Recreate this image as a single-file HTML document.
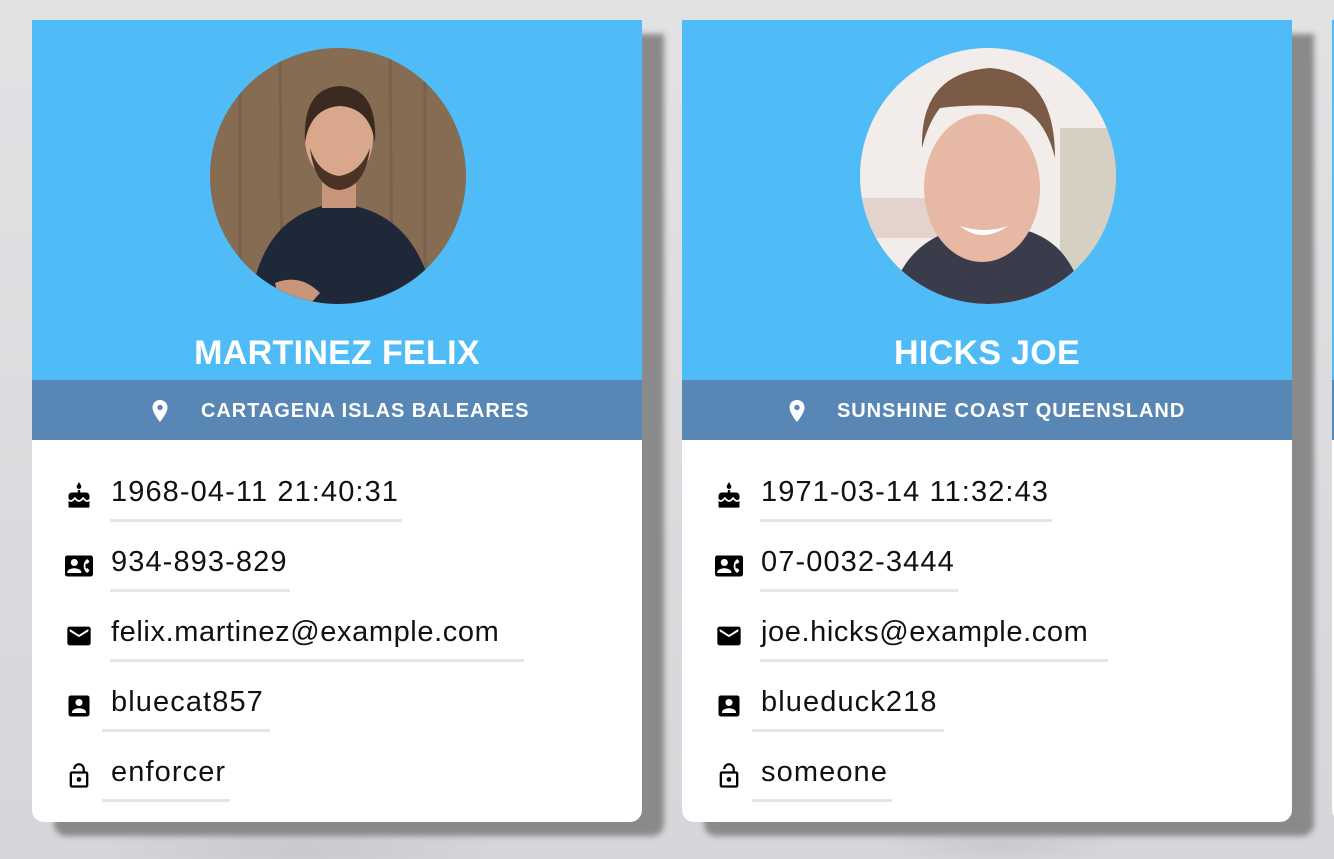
<!DOCTYPE html>
<html><head><meta charset="utf-8"><style>
html,body{margin:0;padding:0}
body{width:1334px;height:859px;overflow:hidden;background:#dcdce0;font-family:"Liberation Sans",sans-serif;position:relative}
.bgt{position:absolute;inset:0;background:
 radial-gradient(ellipse 200px 30px at 300px 850px,#c9c9cd,transparent),
 radial-gradient(ellipse 120px 20px at 1000px 845px,#cacace,transparent),
 linear-gradient(180deg,#e2e2e5,#d6d6da)}
.card{position:absolute;top:20px;width:610px;height:802px;background:#fff;border-radius:0 0 12px 12px;box-shadow:22px 14px 6px #8a8a8a}
.head{position:absolute;left:0;top:0;width:610px;height:360px;background:#4fbcf7}
.name{position:absolute;left:0;width:610px;top:313px;text-align:center;color:#fff;font-weight:bold;font-size:34px;line-height:40px;letter-spacing:0.3px}
.band{position:absolute;left:0;top:360px;width:610px;height:60px;background:#5887b5;color:#fff;font-weight:bold;font-size:20px;line-height:60px;letter-spacing:0.95px}
.band svg{position:absolute;top:19px}
.band span{position:absolute;top:1px}
.av{position:absolute;left:178px;top:28px;width:256px;height:256px;border-radius:50%;overflow:hidden}
.row{position:absolute;left:0;height:40px}
.row svg{position:absolute;left:33px;top:8px}
.row .t{position:absolute;font-size:29px;line-height:34px;color:#111;white-space:nowrap;top:1px;letter-spacing:1.1px}
.row .u{position:absolute;height:3px;background:#e8e4e6;top:45px}
</style></head><body>
<div class="bgt"></div>
<div class="card" style="left:1332px"><div class="head"></div><div class="band"></div></div>

<!-- card 1 -->
<div class="card" style="left:32px">
 <div class="head">
  <div class="av">
   <svg width="256" height="256" viewBox="0 0 256 256">
    <rect width="256" height="256" fill="#7d634c"/>
    <g opacity=".35" stroke="#4a3828" stroke-width="3"><line x1="30" y1="0" x2="30" y2="256"/><line x1="70" y1="0" x2="72" y2="256"/><line x1="180" y1="0" x2="182" y2="256"/><line x1="215" y1="0" x2="215" y2="256"/></g>
    <rect x="0" y="0" width="256" height="256" fill="#a08266" opacity=".3"/>
    <path d="M40 256 C50 180 90 160 128 155 C170 160 210 180 225 256Z" fill="#1e2838"/>
    <rect x="112" y="120" width="34" height="40" fill="#c9957a"/>
    <ellipse cx="129" cy="90" rx="34" ry="44" fill="#d9a88c"/>
    <path d="M95 95 Q92 40 130 38 Q168 40 165 95 Q160 60 130 58 Q100 60 95 95Z" fill="#3b2a20"/>
    <path d="M100 100 Q105 140 129 142 Q155 140 160 100 Q150 125 129 128 Q108 125 100 100Z" fill="#4a3326"/>
    <path d="M65 235 Q90 225 110 245 L100 256 L70 256Z" fill="#c9957a"/>
   </svg>
  </div>
  <div class="name">MARTINEZ FELIX</div>
 </div>
 <div class="band">
  <svg style="left:118px" width="20" height="24" viewBox="0 0 20 24"><path d="M10 1C5.6 1 2.5 4.3 2.5 8.5 2.5 14 10 23 10 23s7.5-9 7.5-14.5C17.5 4.3 14.4 1 10 1zm0 10.2a2.7 2.7 0 110-5.4 2.7 2.7 0 010 5.4z" fill="#fff"/></svg>
  <span style="left:169px">CARTAGENA ISLAS BALEARES</span>
 </div>
 <div class="row" style="top:454px"><svg width="28" height="28" viewBox="0 0 24 24"><path d="M12 6c1.1 0 2-.9 2-2 0-.38-.1-.73-.29-1.030L12 0l-1.71 2.97c-.19.3-.29.65-.29 1.03 0 1.1.9 2 2 2zm4.6 9.99l-1.07-1.07-1.08 1.07c-1.3 1.3-3.58 1.31-4.89 0l-1.07-1.07-1.09 1.07C6.75 16.64 5.88 17 4.96 17c-.73 0-1.4-.23-1.96-.61V21c0 .55.45 1 1 1h16c.55 0 1-.45 1-1v-4.61c-.56.38-1.23.61-1.96.61-.92 0-1.79-.36-2.44-1.01zM18 9h-5V7h-2v2H6c-1.66 0-3 1.34-3 3v1.54c0 1.08.88 1.96 1.96 1.960.52 0 1.02-.2 1.38-.57l2.14-2.13 2.13 2.13c.74.74 2.03.74 2.77 0l2.14-2.13 2.13 2.13c.37.37.86.57 1.38.57 1.08 0 1.96-.88 1.96-1.96V12C21 10.34 19.66 9 18 9z"/></svg><span class="t" style="left:79px">1968-04-11 21:40:31</span><div class="u" style="left:78px;width:292px"></div></div>
 <div class="row" style="top:524px"><svg width="28" height="28" viewBox="0 0 24 24"><path d="M22 3H2C.9 3 0 3.9 0 5v14c0 1.1.9 2 2 2h20c1.1 0 1.99-.9 1.99-2L24 5c0-1.1-.9-2-2-2zM8 6c1.66 0 3 1.34 3 3s-1.34 3-3 3-3-1.34-3-3 1.34-3 3-3zm6 12H2v-1c0-2 4-3.1 6-3.1s6 1.1 6 3.1v1zm3.85-4h1.64L21 16l-1.99 1.99c-1.31-.98-2.28-2.38-2.73-3.99-.18-.64-.28-1.31-.28-2s.1-1.36.28-2c.45-1.62 1.42-3.01 2.73-3.99L21 8l-1.51 2h-1.64c-.22.63-.35 1.3-.35 2s.13 1.37.35 2z"/></svg><span class="t" style="left:79px">934-893-829</span><div class="u" style="left:78px;width:180px"></div></div>
 <div class="row" style="top:594px"><svg width="28" height="28" viewBox="0 0 24 24"><path d="M20 4H4c-1.1 0-2 .9-2 2v12c0 1.1.9 2 2 2h16c1.1 0 2-.9 2-2V6c0-1.1-.9-2-2-2zm0 4l-8 5-8-5V6l8 5 8-5v2z"/></svg><span class="t" style="left:79px;letter-spacing:0.6px">felix.martinez@example.com</span><div class="u" style="left:78px;width:414px"></div></div>
 <div class="row" style="top:664px"><svg width="28" height="28" viewBox="0 0 24 24"><path d="M3 5v14c0 1.1.89 2 2 2h14c1.1 0 2-.9 2-2V5c0-1.1-.9-2-2-2H5c-1.11 0-2 .9-2 2zm12 4c0 1.66-1.34 3-3 3s-3-1.34-3-3 1.34-3 3-3 3 1.34 3 3zm-9 8c0-2 4-3.1 6-3.1s6 1.1 6 3.1v1H6v-1z"/></svg><span class="t" style="left:79px">bluecat857</span><div class="u" style="left:70px;width:168px"></div></div>
 <div class="row" style="top:734px"><svg width="28" height="28" viewBox="0 0 24 24"><path d="M12 17c1.1 0 2-.9 2-2s-.9-2-2-2-2 .9-2 2 .9 2 2 2zm6-9h-1V6c0-2.76-2.24-5-5-5S7 3.24 7 6h1.9c0-1.71 1.39-3.1 3.1-3.1 1.71 0 3.1 1.39 3.1 3.1v2H6c-1.1 0-2 .9-2 2v10c0 1.1.9 2 2 2h12c1.1 0 2-.9 2-2V10c0-1.1-.9-2-2-2zm0 12H6V10h12v10z"/></svg><span class="t" style="left:79px">enforcer</span><div class="u" style="left:70px;width:128px"></div></div>
</div>

<!-- card 2 -->
<div class="card" style="left:682px">
 <div class="head">
  <div class="av">
   <svg width="256" height="256" viewBox="0 0 256 256">
    <rect width="256" height="256" fill="#f2ecea"/>
    <rect x="0" y="150" width="80" height="40" fill="#d8c3b8" opacity=".6"/>
    <rect x="200" y="80" width="56" height="150" fill="#b9b49a" opacity=".5"/>
    <path d="M30 256 C40 200 80 180 125 175 C175 180 210 190 225 256Z" fill="#3a3c4c"/>
    <ellipse cx="122" cy="140" rx="58" ry="74" fill="#e7b8a4"/>
    <path d="M62 100 Q60 25 130 20 Q195 25 195 110 Q185 70 160 60 Q120 55 80 60 Q68 75 62 100Z" fill="#7b5a46"/>
    <path d="M100 178 Q122 196 148 178 Q124 186 100 178Z" fill="#fff"/>
   </svg>
  </div>
  <div class="name">HICKS JOE</div>
 </div>
 <div class="band">
  <svg style="left:105px" width="20" height="24" viewBox="0 0 20 24"><path d="M10 1C5.6 1 2.5 4.3 2.5 8.5 2.5 14 10 23 10 23s7.5-9 7.5-14.5C17.5 4.3 14.4 1 10 1zm0 10.2a2.7 2.7 0 110-5.4 2.7 2.7 0 010 5.4z" fill="#fff"/></svg>
  <span style="left:155px">SUNSHINE COAST QUEENSLAND</span>
 </div>
 <div class="row" style="top:454px"><svg width="28" height="28" viewBox="0 0 24 24"><path d="M12 6c1.1 0 2-.9 2-2 0-.38-.1-.73-.29-1.03L12 0l-1.71 2.97c-.19.3-.29.65-.29 1.03 0 1.1.9 2 2 2zm4.6 9.99l-1.07-1.07-1.08 1.07c-1.3 1.3-3.58 1.31-4.89 0l-1.07-1.07-1.09 1.07C6.75 16.64 5.88 17 4.96 17c-.73 0-1.4-.23-1.96-.61V21c0 .55.45 1 1 1h16c.55 0 1-.45 1-1v-4.61c-.56.38-1.23.61-1.96.61-.92 0-1.79-.36-2.44-1.01zM18 9h-5V7h-2v2H6c-1.66 0-3 1.34-3 3v1.54c0 1.08.88 1.96 1.96 1.96.52 0 1.020-.2 1.38-.57l2.14-2.13 2.13 2.13c.74.74 2.03.74 2.77 0l2.14-2.13 2.13 2.13c.37.37.86.57 1.38.57 1.08 0 1.96-.88 1.96-1.96V12C21 10.34 19.66 9 18 9z"/></svg><span class="t" style="left:79px">1971-03-14 11:32:43</span><div class="u" style="left:78px;width:292px"></div></div>
 <div class="row" style="top:524px"><svg width="28" height="28" viewBox="0 0 24 24"><path d="M22 3H2C.9 3 0 3.9 0 5v14c0 1.1.9 2 2 2h20c1.1 0 1.99-.9 1.99-2L24 5c0-1.1-.9-2-2-2zM8 6c1.66 0 3 1.34 3 3s-1.34 3-3 3-3-1.34-3-3 1.34-3 3-3zm6 12H2v-1c0-2 4-3.1 6-3.1s6 1.1 6 3.1v1zm3.85-4h1.64L21 16l-1.99 1.99c-1.31-.98-2.28-2.38-2.73-3.99-.18-.64-.28-1.31-.28-2s.1-1.36.28-2c.45-1.62 1.42-3.01 2.73-3.99L21 8l-1.51 2h-1.64c-.22.63-.35 1.3-.35 2s.13 1.37.35 2z"/></svg><span class="t" style="left:79px">07-0032-3444</span><div class="u" style="left:78px;width:198px"></div></div>
 <div class="row" style="top:594px"><svg width="28" height="28" viewBox="0 0 24 24"><path d="M20 4H4c-1.1 0-2 .9-2 2v12c0 1.1.9 2 2 2h16c1.1 0 2-.9 2-2V6c0-1.1-.9-2-2-2zm0 4l-8 5-8-5V6l8 5 8-5v2z"/></svg><span class="t" style="left:79px;letter-spacing:0.6px">joe.hicks@example.com</span><div class="u" style="left:78px;width:348px"></div></div>
 <div class="row" style="top:664px"><svg width="28" height="28" viewBox="0 0 24 24"><path d="M3 5v14c0 1.1.89 2 2 2h14c1.1 0 2-.9 2-2V5c0-1.1-.9-2-2-2H5c-1.11 0-2 .9-2 2zm12 4c0 1.66-1.34 3-3 3s-3-1.34-3-3 1.34-3 3-3 3 1.34 3 3zm-9 8c0-2 4-3.1 6-3.1s6 1.1 6 3.1v1H6v-1z"/></svg><span class="t" style="left:79px">blueduck218</span><div class="u" style="left:70px;width:192px"></div></div>
 <div class="row" style="top:734px"><svg width="28" height="28" viewBox="0 0 24 24"><path d="M12 17c1.1 0 2-.9 2-2s-.9-2-2-2-2 .9-2 2 .9 2 2 2zm6-9h-1V6c0-2.76-2.24-5-5-5S7 3.24 7 6h1.9c0-1.71 1.39-3.1 3.1-3.1 1.71 0 3.1 1.39 3.1 3.1v2H6c-1.1 0-2 .9-2 2v10c0 1.1.9 2 2 2h12c1.1 0 2-.9 2-2V10c0-1.1-.9-2-2-2zm0 12H6V10h12v10z"/></svg><span class="t" style="left:79px">someone</span><div class="u" style="left:70px;width:140px"></div></div>
</div>
</body></html>
